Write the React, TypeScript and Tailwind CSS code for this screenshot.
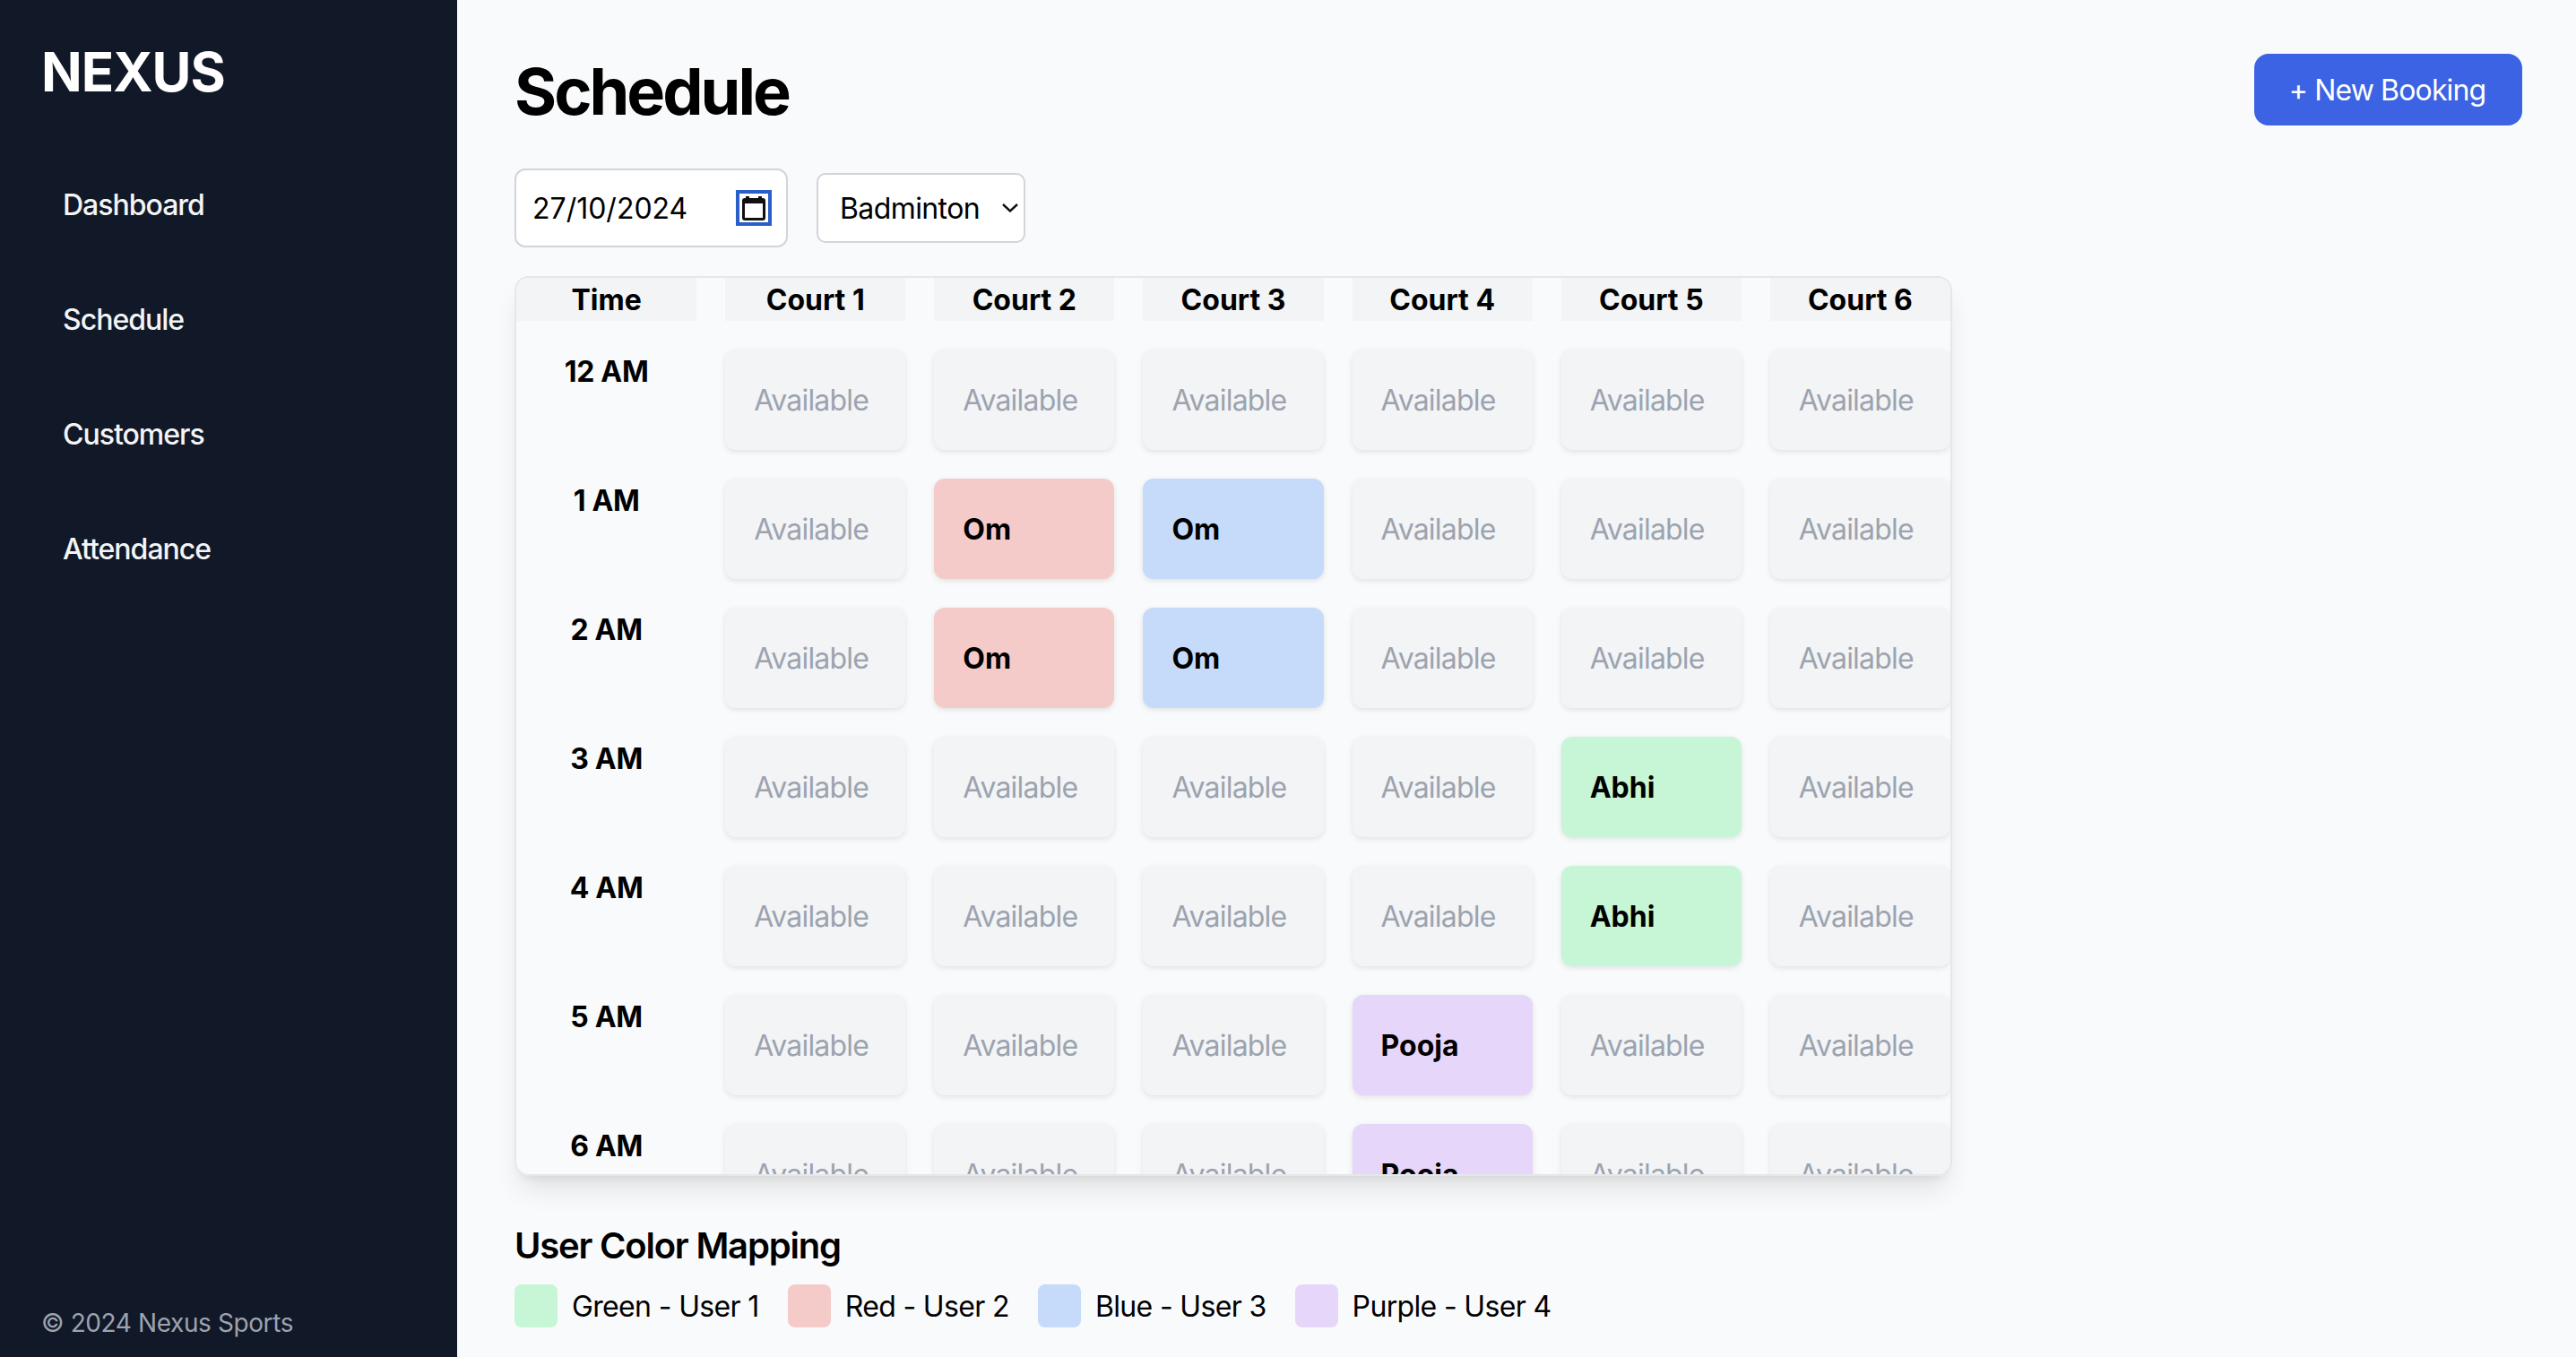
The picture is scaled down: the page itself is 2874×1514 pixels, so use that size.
// Rows of the schedule grid. Only booked slots are listed, everything else is "Available".
const HOURS = ["12 AM", "1 AM", "2 AM", "3 AM", "4 AM", "5 AM", "6 AM", "7 AM"];
const COURTS = ["Court 1", "Court 2", "Court 3", "Court 4", "Court 5", "Court 6"];
const NAV_ITEMS = ["Dashboard", "Schedule", "Customers", "Attendance"];

const BOOKINGS: Record<string, { name: string; color: string }> = {
  "1 AM-1": { name: "Om", color: "bg-[#f5cbc9]" },
  "1 AM-2": { name: "Om", color: "bg-[#c6daf9]" },
  "2 AM-1": { name: "Om", color: "bg-[#f5cbc9]" },
  "2 AM-2": { name: "Om", color: "bg-[#c6daf9]" },
  "3 AM-4": { name: "Abhi", color: "bg-[#c6f6d5]" },
  "4 AM-4": { name: "Abhi", color: "bg-[#c6f6d5]" },
  "5 AM-3": { name: "Pooja", color: "bg-[#e6d6fa]" },
  "6 AM-3": { name: "Pooja", color: "bg-[#e6d6fa]" },
};

const LEGEND = [
  { label: "Green - User 1", color: "bg-[#c6f6d5]" },
  { label: "Red - User 2", color: "bg-[#f5cbc9]" },
  { label: "Blue - User 3", color: "bg-[#c6daf9]" },
  { label: "Purple - User 4", color: "bg-[#e6d6fa]" },
];

function Sidebar() {
  return (
    <aside className="flex h-full w-[510px] shrink-0 flex-col bg-[#111827] pt-[44px] pb-[18px] pl-[46px] text-white">
      <div className="text-[60px] leading-[72px] font-bold tracking-[-1px]">NEXUS</div>
      <nav className="mt-[49px] flex flex-col">
        {NAV_ITEMS.map((item) => (
          <a key={item} href="#" className="flex h-[128px] items-center pl-[24px] text-[32px] font-medium tracking-[-1px] text-gray-100">
            {item}
          </a>
        ))}
      </nav>
      <p className="mt-auto text-[28px] leading-[40px] tracking-[-0.4px] text-[#9ca3af]">© 2024 Nexus Sports</p>
    </aside>
  );
}

function CalendarIcon() {
  return (
    <span className="flex h-[40px] w-[40px] items-center justify-center border-[4px] border-[#2a5fc8]">
      <svg width="26" height="27" viewBox="0 0 26 27" fill="none">
        <path d="M4 0h4v2h10V0h4v2h1a3 3 0 0 1 3 3v19a3 3 0 0 1-3 3H3a3 3 0 0 1-3-3V5a3 3 0 0 1 3-3h1z" fill="#111" />
        <rect x="3" y="8" width="20" height="16" fill="#fff" />
      </svg>
    </span>
  );
}

function SelectChevron() {
  return (
    <svg className="absolute top-[34px] right-[8px]" width="18" height="10" viewBox="0 0 18 10" fill="none">
      <path d="M1 1l8 7.5L17 1" stroke="#111" strokeWidth="2.4" />
    </svg>
  );
}

function Slot({ hour, court }: { hour: string; court: number }) {
  const booking = BOOKINGS[`${hour}-${court}`];
  return (
    <div
      className={`flex h-[112px] items-center rounded-[12px] pt-[2px] pl-[32px] text-[32px] shadow-[0_2px_6px_0_rgba(0,0,0,0.1)] ${
        booking ? `${booking.color} font-bold text-black` : "bg-[#f3f4f6] tracking-[-0.8px] text-[#9ca3af]"
      }`}
    >
      {booking ? booking.name : "Available"}
    </div>
  );
}

function ScheduleGrid() {
  return (
    <div className="h-[1004px] w-[1604px] overflow-hidden rounded-[16px] border-2 border-[#e5e7eb] shadow-[0_20px_30px_-6px_rgba(0,0,0,0.1),0_8px_12px_-8px_rgba(0,0,0,0.1)]">
      <div className="grid grid-cols-7 gap-8">
        {["Time", ...COURTS].map((label) => (
          <div key={label} className="h-[48px] bg-[#f3f4f6] text-center text-[32px] leading-[50px] font-bold">
            {label}
          </div>
        ))}
        {HOURS.map((hour) => (
          <div key={hour} className="contents">
            <div className="text-center text-[32px] leading-[50px] font-bold tracking-[-0.3px]">{hour}</div>
            {COURTS.map((_, i) => (
              <Slot key={i} hour={hour} court={i} />
            ))}
          </div>
        ))}
      </div>
    </div>
  );
}

export default function App() {
  return (
    <div className="flex h-screen overflow-hidden bg-[#f9fafb] font-['Inter',sans-serif] text-black">
      <Sidebar />
      <main className="min-w-0 flex-1 pt-[60px] pr-[60px] pl-16">
        <header className="mb-12 flex items-center justify-between">
          <h1 className="h-[80px] text-[72px] leading-[84px] font-bold tracking-[-3px]">Schedule</h1>
          <button className="h-[80px] w-[299px] rounded-[16px] bg-[#3b63e3] pt-[2px] pr-[2px] text-[32px] tracking-[-0.85px] text-white">
            + New Booking
          </button>
        </header>

        <div className="mb-8 flex items-center gap-8">
          <label className="flex h-[88px] w-[305px] items-center justify-between rounded-[12px] border-2 border-[#d1d5db] bg-white pr-[16px] pl-[18px]">
            <input readOnly value="27/10/2024" className="w-[200px] pt-[2px] text-[32px] outline-none" />
            <CalendarIcon />
          </label>
          <div className="relative">
            <select className="h-[78px] w-[233px] appearance-none rounded-[10px] border-2 border-[#d1d5db] bg-white pt-[2px] pl-[24px] text-[32px] tracking-[-0.6px] outline-none">
              <option>Badminton</option>
            </select>
            <SelectChevron />
          </div>
        </div>

        <ScheduleGrid />

        <h2 className="mt-[50px] mb-[14px] text-[40px] leading-[56px] font-semibold tracking-[-1.2px]">User Color Mapping</h2>
        <div className="flex gap-8">
          {LEGEND.map((entry) => (
            <div key={entry.label} className="flex items-center gap-4">
              <span className={`h-[48px] w-[48px] rounded-[8px] ${entry.color}`} />
              <span className="pt-[2px] text-[32px] tracking-[-0.65px]">{entry.label}</span>
            </div>
          ))}
        </div>
      </main>
    </div>
  );
}
